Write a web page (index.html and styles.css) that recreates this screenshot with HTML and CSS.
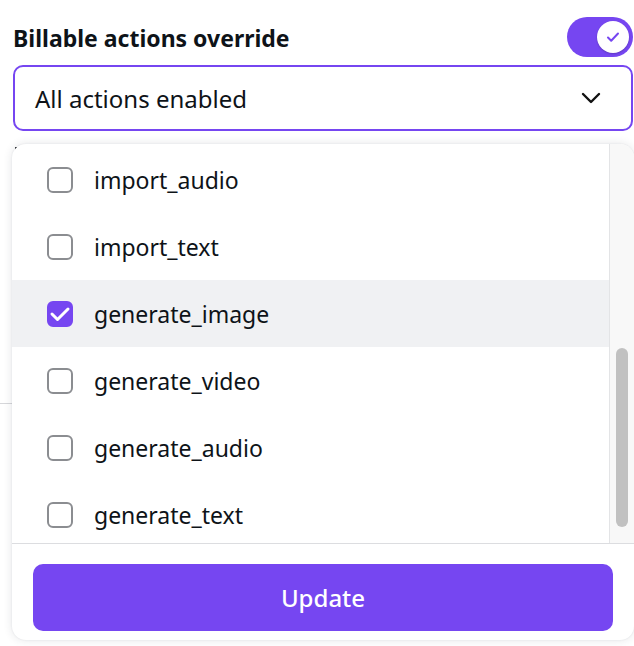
FILE: index.html
```html
<!DOCTYPE html>
<html lang="en">
<head>
<meta charset="utf-8">
<title>Billable actions override</title>
<link rel="stylesheet" href="styles.css">
</head>
<body>
<div class="page">
  <div class="header">
    <h1 class="title">Billable actions override</h1>
    <div class="toggle">
      <div class="knob">
        <svg width="18" height="18" viewBox="0 0 18 18"><path d="M4 9.5l3.2 3.2L14 5.5" fill="none" stroke="#7646f1" stroke-width="2" stroke-linecap="round" stroke-linejoin="round"/></svg>
      </div>
    </div>
  </div>
  <div class="select">
    <span class="select-text">All actions enabled</span>
    <svg class="chevron" width="20" height="12" viewBox="0 0 20 12"><path d="M2 2l8 8 8-8" fill="none" stroke="#111" stroke-width="2.4" stroke-linecap="round" stroke-linejoin="round"/></svg>
  </div>
  <div class="under">
    <div class="under-mark"></div>
    <div class="under-line"></div>
    <div class="panel">
      <div class="body">
        <ul class="list">
          <li class="row"><span class="cb"></span><span class="label">import_audio</span></li>
          <li class="row"><span class="cb"></span><span class="label">import_text</span></li>
          <li class="row row-active"><span class="cb cb-on"><svg width="26" height="26" viewBox="0 0 26 26"><path d="M5 13l5.5 5.5L21 8" fill="none" stroke="#fff" stroke-width="3" stroke-linecap="round" stroke-linejoin="round"/></svg></span><span class="label">generate_image</span></li>
          <li class="row"><span class="cb"></span><span class="label">generate_video</span></li>
          <li class="row"><span class="cb"></span><span class="label">generate_audio</span></li>
          <li class="row"><span class="cb"></span><span class="label">generate_text</span></li>
        </ul>
        <div class="track"><div class="thumb"></div></div>
      </div>
      <div class="footer">
        <button class="btn">Update</button>
      </div>
    </div>
  </div>
</div>
</body>
</html>
```
FILE: styles.css
```css
html, body {
  margin: 0;
  padding: 0;
  background: #ffffff;
  overflow: hidden;
}
body {
  width: 634px;
  height: 646px;
  font-family: "Noto Sans", Roboto, sans-serif;
  color: #0e1318;
}
.page {
  padding: 17px 1px 0 13px;
}
.header {
  display: flex;
  justify-content: space-between;
  align-items: center;
  height: 40px;
}
.title {
  margin: 0;
  padding-top: 3px;
  font-size: 23px;
  font-weight: 700;
  line-height: 37px;
  color: #0e1318;
}
.toggle {
  width: 66px;
  height: 40px;
  border-radius: 20px;
  background: #7646f1;
  display: flex;
  align-items: center;
  justify-content: flex-end;
  padding-right: 4px;
  box-sizing: border-box;
}
.knob {
  width: 32px;
  height: 32px;
  border-radius: 50%;
  background: #fff;
  display: flex;
  align-items: center;
  justify-content: center;
  box-shadow: 0 1px 2px rgba(0,0,0,0.2);
}
.select {
  margin-top: 8px;
  height: 66px;
  box-sizing: border-box;
  border: 2px solid #7646f1;
  border-radius: 10px;
  display: flex;
  align-items: center;
  justify-content: space-between;
  padding: 0 30px 0 20px;
}
.select-text {
  font-size: 24px;
  color: #0e1318;
}
.chevron {
  display: block;
}
.under {
  position: relative;
  margin-left: -13px;
  margin-top: 13px;
  padding-left: 12px;
}
.under-mark {
  position: absolute;
  left: 15px;
  top: 3px;
  width: 2px;
  height: 6px;
  background: #3a3d42;
}
.under-line {
  position: absolute;
  left: 0;
  top: 259px;
  width: 14px;
  height: 1px;
  background: #d6d7da;
}
.panel {
  position: relative;
  background: #fff;
  border-radius: 14px;
  box-shadow: 0 0 10px rgba(30, 40, 60, 0.12), 0 0 2px rgba(30,40,60,0.08);
  overflow: hidden;
  width: 622px;
}
.body {
  display: flex;
  height: 399px;
  border-bottom: 1px solid #dcdde0;
}
.list {
  list-style: none;
  margin: 0;
  padding: 2px 0 0;
  flex: 1;
  overflow: hidden;
  border-right: 1px solid #e3e4e6;
}
.row {
  display: flex;
  align-items: center;
  height: 67px;
  padding-left: 35px;
}
.row-active {
  background: #f0f1f3;
}
.cb {
  width: 26px;
  height: 26px;
  box-sizing: border-box;
  border: 2px solid #8b8d91;
  border-radius: 6px;
  display: flex;
  align-items: center;
  justify-content: center;
  flex: none;
}
.cb-on {
  background: #7646f1;
  border-color: #7646f1;
}
.cb-on svg {
  display: block;
  flex: none;
}
.label {
  margin-left: 21px;
  font-size: 23px;
  color: #0e1318;
}
.track {
  width: 18px;
  background: #f8f8f8;
  display: flex;
  flex-direction: column;
  padding-left: 6px;
}
.thumb {
  margin-top: 204px;
  width: 12px;
  height: 179px;
  border-radius: 6px;
  background: #c1c1c1;
}
.footer {
  padding: 20px 21px 9px;
}
.btn {
  display: block;
  width: 100%;
  height: 67px;
  border: none;
  border-radius: 10px;
  background: #7646f1;
  color: #fff;
  font-family: "Noto Sans", Roboto, sans-serif;
  font-size: 24px;
  font-weight: 500;
}
```
